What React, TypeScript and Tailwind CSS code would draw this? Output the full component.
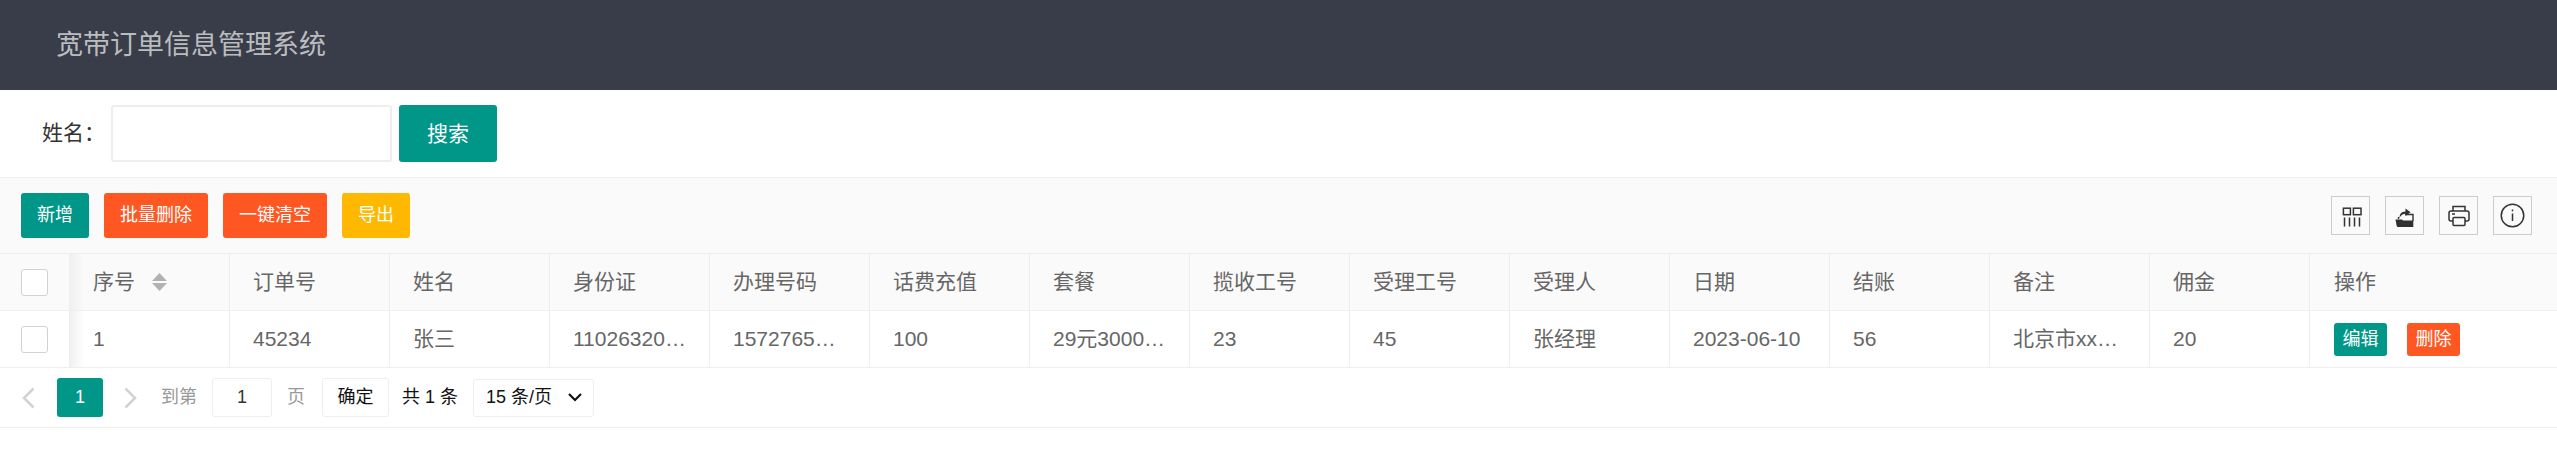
const font = { fontFamily: '"Liberation Sans","Noto Sans CJK SC",sans-serif' };

const columns = ["序号", "订单号", "姓名", "身份证", "办理号码", "话费充值", "套餐", "揽收工号", "受理工号", "受理人", "日期", "结账", "备注", "佣金"];
const row = ["1", "45234", "张三", "11026320…", "1572765…", "100", "29元3000…", "23", "45", "张经理", "2023-06-10", "56", "北京市xx…", "20"];

function Checkbox() {
  return <span className="block w-[27px] h-[27px] rounded-[3px] border border-[#d2d2d2] bg-white" />;
}

function SmallBtn({ label, color, w }: { label: string; color: string; w: string }) {
  return <button className={`${w} ${color} h-[45px] rounded-[3px] text-white text-[18px] text-center`}>{label}</button>;
}

function ToolIcon({ children }: { children: React.ReactNode }) {
  return <div className="w-[39px] h-[39px] border border-[#ccc] flex items-center justify-center">{children}</div>;
}

export default function App() {
  return (
    <div className="w-[2557px] h-[450px] bg-white overflow-hidden" style={font}>
      <header className="h-[90px] bg-[#393D49] flex items-center pl-[56px] text-[27px] text-[#bbbcbf]">宽带订单信息管理系统</header>

      <div className="h-[87px] flex items-start pt-[15px] pl-[42px]">
        <label className="w-[69px] h-[57px] leading-[55px] text-[21px] text-[#333] whitespace-nowrap">姓名：</label>
        <div className="w-[281px] h-[57px] rounded-[3px] border-2 border-[#eeeeee] bg-white" />
        <button className="ml-[7px] w-[98px] h-[57px] rounded-[3px] bg-[#009688] text-white text-[21px]">搜索</button>
      </div>

      <div className="h-[76px] border-t border-[#eeeeee] bg-[#fafafa] flex items-center justify-between pl-[21px] pr-[25px]">
        <div className="flex gap-[15px]">
          <SmallBtn label="新增" color="bg-[#009688]" w="w-[68px]" />
          <SmallBtn label="批量删除" color="bg-[#FF5722]" w="w-[104px]" />
          <SmallBtn label="一键清空" color="bg-[#FF5722]" w="w-[104px]" />
          <SmallBtn label="导出" color="bg-[#FFB800]" w="w-[68px]" />
        </div>
        <div className="flex gap-[15px]">
          <ToolIcon>
            <svg width="23" height="22" viewBox="0 0 23 22" fill="none" stroke="#333" strokeWidth="1.5">
              <rect x="4.400" y="3.200" width="7" height="6.500" />
              <rect x="14.400" y="3.200" width="7.600" height="6.500" />
              <path d="M5.500 12.500v9M10.500 12.500v9M15.500 12.500v9M20.500 12.500v9" />
            </svg>
          </ToolIcon>
          <ToolIcon>
            <svg width="21" height="24" viewBox="0 0 21 24" fill="none">
              <path d="M4.500 15v-2M11 10.500h8V17" stroke="#333" strokeWidth="1.400" />
              <path d="M5.500 14C5.500 9.500 7.500 8 11.500 7.500V4.500L16.500 8.300 11.500 12V9.800C9 9.800 7 11 5.500 14z" fill="#2f2f2f" />
              <path d="M1.500 15.500H8l1 1h10.300V23H4Q3 23 2.700 22z" fill="#2f2f2f" />
            </svg>
          </ToolIcon>
          <ToolIcon>
            <svg width="22" height="22" viewBox="0 0 22 22" fill="none" stroke="#333" strokeWidth="1.5">
              <path d="M5 6V1.500h12V6" />
              <path d="M5 16H3a2 2 0 0 1-2-2V8a2 2 0 0 1 2-2h16a2 2 0 0 1 2 2v6a2 2 0 0 1-2 2h-2" />
              <rect x="5" y="12.500" width="12" height="8" rx="1" />
              <path d="M4 9h3" />
            </svg>
          </ToolIcon>
          <ToolIcon>
            <svg width="25" height="25" viewBox="0 0 25 25" fill="none" stroke="#333" strokeWidth="1.5">
              <circle cx="12.500" cy="12.500" r="11.250" />
              <path d="M12.500 10.500v7.500" />
              <path d="M12.500 6.500v1.800" />
            </svg>
          </ToolIcon>
        </div>
      </div>

      <div className="grid grid-cols-[70px_repeat(14,160px)_1fr] text-[21px] text-[#666]">
        <div className="h-[58px] border-y border-[#eeeeee] bg-[#fafafa] flex items-center pl-[21px] border-r"><Checkbox /></div>
        {columns.map((c, i) => (
          <div key={c} className="h-[58px] border-y border-r border-[#eeeeee] bg-[#fafafa] flex items-center pl-[23px] whitespace-nowrap relative">
            {i === 0 && <span className="absolute left-0 top-0 bottom-0 w-[14px] bg-gradient-to-r from-[#f0f0f0] to-transparent" />}
            <span>{c}</span>
            {i === 0 && (
              <svg className="ml-[17px]" width="15" height="18" viewBox="0 0 15 18" fill="#b2b2b2">
                <path d="M7.500 0L15 8H0z" />
                <path d="M0 10h15l-7.500 8z" />
              </svg>
            )}
          </div>
        ))}
        <div className="h-[58px] border-y border-[#eeeeee] bg-[#fafafa] flex items-center pl-[24px]">操作</div>

        <div className="h-[57px] border-b border-r border-[#eeeeee] flex items-center pl-[21px]"><Checkbox /></div>
        {row.map((c, i) => (
          <div key={i} className="h-[57px] border-b border-r border-[#eeeeee] flex items-center pl-[23px] whitespace-nowrap overflow-hidden relative">
            {i === 0 && <span className="absolute left-0 top-0 bottom-0 w-[14px] bg-gradient-to-r from-[#f0f0f0] to-transparent" />}
            {c}
          </div>
        ))}
        <div className="h-[57px] border-b border-[#eeeeee] flex items-center pl-[24px] gap-[20px]">
          <button className="w-[53px] h-[33px] rounded-[3px] bg-[#009688] text-white text-[18px]">编辑</button>
          <button className="w-[53px] h-[33px] rounded-[3px] bg-[#FF5722] text-white text-[18px]">删除</button>
        </div>
      </div>

      <div className="h-[60px] border-b border-[#eeeeee] flex items-center text-[18px] text-[#333]">
        <svg className="ml-[22px]" width="13" height="22" viewBox="0 0 13 22" fill="none" stroke="#d2d2d2" strokeWidth="2.500"><path d="M11.500 1.500L2 11l9.500 9.500" /></svg>
        <span className="ml-[22px] w-[46px] h-[39px] rounded-[3px] bg-[#009688] text-white flex items-center justify-center">1</span>
        <svg className="ml-[21px]" width="13" height="22" viewBox="0 0 13 22" fill="none" stroke="#d2d2d2" strokeWidth="2.500"><path d="M1.500 1.500L11 11l-9.500 9.500" /></svg>
        <span className="ml-[24px] text-[#999]">到第</span>
        <span className="ml-[15px] w-[60px] h-[39px] rounded-[3px] border border-[#eeeeee] flex items-center justify-center">1</span>
        <span className="ml-[15px] text-[#999]">页</span>
        <button className="ml-[17px] w-[67px] h-[39px] rounded-[3px] border border-[#eeeeee] text-[#111]">确定</button>
        <span className="ml-[13px] text-[#111] whitespace-nowrap">共 1 条</span>
        <div className="ml-[15px] w-[121px] h-[38px] rounded-[3px] border border-[#eeeeee] flex items-center justify-between pl-[12px] pr-[11px] text-[#111] whitespace-nowrap">
          <span>15 条/页</span>
          <svg width="14" height="9" viewBox="0 0 14 9" fill="none" stroke="#111" strokeWidth="2.200"><path d="M1 1l6 6 6-6" /></svg>
        </div>
      </div>
    </div>
  );
}
